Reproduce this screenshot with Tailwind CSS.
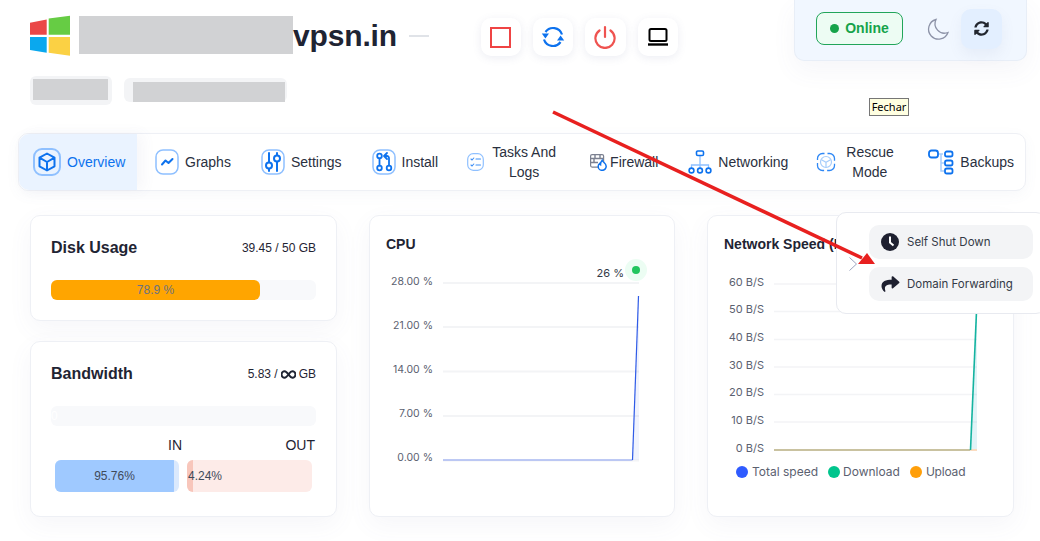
<!DOCTYPE html>
<html lang="en">
<head>
<meta charset="UTF-8">
<title>vpsn.in</title>
<script src="https://cdn.jsdelivr.net/npm/@tailwindcss/browser@4"></script>
</head>
<body>
<div class="relative w-[1040px] h-[541px] overflow-hidden bg-white font-['Liberation_Sans',sans-serif] text-[#1f2433]">

  <!-- header -->
  <div class="flex items-start h-[61px]">
    <svg class="ml-[30px] mt-[15px] w-[40px] h-[41px]" viewBox="30 15 40 41">
      <path fill="#ea4747" d="M30 22.7 46.7 19.4V34.7H30z"/>
      <path fill="#66cc44" d="M48.7 18.4 70 15.7V34.7H48.7z"/>
      <path fill="#0aa8ee" d="M30 37H46.7V52.7L30 50z"/>
      <path fill="#fbd144" d="M48.7 37H70V55.7L48.7 52.7z"/>
    </svg>
    <div class="ml-[9px] mt-[16px] w-[214px] h-[38px] bg-[#d1d2d4]"></div>
    <div class="mt-[18px] text-[30px] leading-[36px] font-bold tracking-[-0.15px]">vpsn.in</div>
    <div class="ml-[12px] mt-[35px] w-[20px] h-[2px] bg-[#e0e3e8]"></div>

    <div class="ml-[52px] mt-[18px] flex gap-[12px]">
      <button class="w-[40px] h-[38px] rounded-[10px] bg-white shadow-[0_2px_8px_rgba(100,110,160,0.12)] flex items-center justify-center">
        <span class="block w-[21px] h-[21px] border-[2.5px] border-[#ef4444]"></span>
      </button>
      <button class="w-[40px] h-[38px] rounded-[10px] bg-white shadow-[0_2px_8px_rgba(100,110,160,0.12)] flex items-center justify-center">
        <svg class="ml-[1px] w-[24px] h-[24px]" viewBox="0 0 24 24" fill="none" stroke="#0d72ee" stroke-width="2.2">
          <path d="M21 9.500A9.300 9.300 0 0 0 4.500 7"/>
          <path d="M3 14.500A9.300 9.300 0 0 0 19.500 17"/>
          <path fill="#0d72ee" stroke="none" d="M0.800 8.500H8L4.400 13.500zM16 15.500H23.200L19.600 10.500z"/>
        </svg>
      </button>
      <button class="w-[41px] h-[38px] rounded-[10px] bg-white shadow-[0_2px_8px_rgba(100,110,160,0.12)] flex items-center justify-center">
        <svg class="w-[24px] h-[24px]" viewBox="0 0 24 24" fill="none" stroke="#ef5350" stroke-width="2.2" stroke-linecap="round">
          <path d="M12 2v10"/>
          <path d="M6.500 5.500a9.600 9.600 0 1 0 11 0"/>
        </svg>
      </button>
      <button class="w-[40px] h-[38px] rounded-[10px] bg-white shadow-[0_2px_8px_rgba(100,110,160,0.12)] flex items-center justify-center">
        <svg class="w-[22px] h-[20px]" viewBox="0 0 22 20" fill="none" stroke="#000">
          <rect x="2.500" y="2" width="17" height="12" rx="1.500" stroke-width="2"/>
          <path d="M1 17.500h20" stroke-width="2.400"/>
        </svg>
      </button>
    </div>

    <!-- status panel -->
    <div class="ml-[116px] w-[233px] h-[61px] flex items-center bg-[#f1f7ff] border border-t-0 border-[#e8eef7] rounded-b-[10px] shadow-[0_10px_24px_rgba(100,110,160,0.06)] pb-[3px]">
      <div class="ml-[21px] w-[87px] h-[33px] flex items-center justify-center gap-[6px] bg-[#edfcf3] border border-[#22a55a] rounded-[8px] text-[14px] font-bold text-[#16a34a]">
        <span class="w-[9px] h-[9px] rounded-full bg-[#16a34a]"></span>Online
      </div>
      <svg class="ml-[23px] w-[24px] h-[24px]" viewBox="0 0 24 24" fill="none" stroke="#8d93a8" stroke-width="1.300">
        <path d="M10 2.500a10 10 0 1 0 12 13 9.500 9.500 0 0 1-12-13z"/>
      </svg>
      <div class="ml-[11px] w-[41px] h-[40px] rounded-[10px] bg-[#e3efff] shadow-[0_6px_14px_rgba(100,110,160,0.08)] flex items-center justify-center">
        <svg class="w-[15px] h-[15px]" viewBox="0 0 512 512" fill="#22262f"><path d="M370.72 133.28C339.458 104.008 298.888 87.962 255.848 88c-77.458.068-144.328 53.178-162.791 126.85-1.344 5.363-6.122 9.15-11.651 9.15H24.103c-7.498 0-13.194-6.807-11.807-14.176C33.933 94.924 134.813 8 256 8c66.448 0 126.791 26.136 171.315 68.685L463.03 40.97C478.149 25.851 504 36.559 504 57.941V192c0 13.255-10.745 24-24 24H345.941c-21.382 0-32.09-25.851-16.971-40.971l41.75-41.749zM32 296h134.059c21.382 0 32.09 25.851 16.971 40.971l-41.75 41.75c31.262 29.273 71.835 45.319 114.876 45.28 77.418-.07 144.315-53.144 162.787-126.849 1.344-5.363 6.122-9.15 11.651-9.15h57.304c7.498 0 13.194 6.807 11.807 14.176C478.067 417.076 377.187 504 256 504c-66.448 0-126.791-26.136-171.315-68.685L48.97 471.03C33.851 486.149 8 475.441 8 454.059V320c0-13.255 10.745-24 24-24z"/></svg>
      </div>
    </div>
  </div>

  <!-- server meta -->
  <div class="flex items-start mt-[15px] ml-[30px] h-[30px]">
    <div class="w-[82px] h-[29px] rounded-[6px] bg-[#f3f4f6] pl-[3px] pt-[3px]">
      <div class="w-[75px] h-[21px] bg-[#d1d2d4]"></div>
    </div>
    <div class="ml-[12px] mt-[2px] w-[163px] h-[24px] rounded-[6px] bg-[#f3f4f6] pl-[9px] pt-[4px]">
      <div class="w-[152px] h-[20px] bg-[#d1d2d4]"></div>
    </div>
  </div>

  <!-- tabs -->
  <nav class="ml-[18px] mt-[27px] w-[1008px] h-[58px] flex items-center border border-[#eef0f5] rounded-[10px] text-[14px] leading-[20px] text-[#2a3040] bg-white shadow-[0_4px_14px_rgba(100,110,160,0.05)]">
    <a class="w-[118px] h-full flex items-center pl-[14px] bg-[#eaf3ff] rounded-l-[10px] text-[#0d72ee] shadow-[6px_0_14px_rgba(100,110,160,0.06)]">
      <svg class="w-[28px] h-[28px]" viewBox="0 0 28 28" fill="none">
        <rect x="1" y="1" width="26" height="26" rx="8" stroke="#8fc0ff" stroke-width="2"/>
        <path d="M14 5.500 21.500 9.700V18.300L14 22.500 6.500 18.300V9.700zM6.500 9.700 14 14 21.500 9.700M14 14V22.500" stroke="#0d72ee" stroke-width="2" stroke-linejoin="round"/>
      </svg>
      <span class="ml-[6px]">Overview</span>
    </a>
    <a class="ml-[18px] flex items-center">
      <svg class="w-[24px] h-[26px]" viewBox="0 0 24 26" fill="none">
        <rect x="1" y="1" width="22" height="24" rx="7" stroke="#8fc0ff" stroke-width="1.500"/>
        <path d="M7 15.500 10.500 11.500 13.500 14 17.500 10" stroke="#0d72ee" stroke-width="2" stroke-linecap="round" stroke-linejoin="round"/>
      </svg>
      <span class="ml-[6px]">Graphs</span>
    </a>
    <a class="ml-[30px] flex items-center">
      <svg class="w-[24px] h-[26px]" viewBox="0 0 24 26" fill="none">
        <rect x="1" y="1" width="22" height="24" rx="7" stroke="#8fc0ff" stroke-width="1.500"/>
        <path d="M8 4v9M8 20v2M16 4v2M16 13v9" stroke="#0d72ee" stroke-width="2" stroke-linecap="round"/>
        <circle cx="8" cy="16.500" r="3" stroke="#0d72ee" stroke-width="2"/>
        <circle cx="16" cy="9.500" r="3" stroke="#0d72ee" stroke-width="2"/>
      </svg>
      <span class="ml-[6px]">Settings</span>
    </a>
    <a class="ml-[30px] flex items-center">
      <svg class="w-[24px] h-[26px]" viewBox="0 0 24 26" fill="none">
        <rect x="1" y="1" width="22" height="24" rx="7" stroke="#8fc0ff" stroke-width="1.500"/>
        <circle cx="7.500" cy="7" r="2.300" stroke="#0d72ee" stroke-width="1.800"/>
        <circle cx="7.500" cy="19" r="2.300" stroke="#0d72ee" stroke-width="1.800"/>
        <circle cx="17" cy="19" r="2.300" stroke="#0d72ee" stroke-width="1.800"/>
        <path d="M7.500 9.500v7M17 16.500V9a2 2 0 0 0-2-2h-2M15 4l-3 3 3 3" stroke="#0d72ee" stroke-width="1.800" stroke-linecap="round" stroke-linejoin="round"/>
      </svg>
      <span class="ml-[6px]">Install</span>
    </a>
    <a class="ml-[29px] flex items-center">
      <svg class="w-[17px] h-[18px]" viewBox="0 0 17 18" fill="none">
        <rect x="0.700" y="0.700" width="15.600" height="16.600" rx="5.500" stroke="#8fc0ff" stroke-width="1.200"/>
        <path d="M4 6l1 1 1.800-2M9 6h4.500M4 12l1 1 1.800-2M9 12h4.500" stroke="#3f8ff5" stroke-width="1.100" stroke-linecap="round"/>
      </svg>
      <span class="ml-[8px] text-center w-[64px]">Tasks And Logs</span>
    </a>
    <a class="ml-[34px] flex items-center">
      <svg class="w-[17px] h-[17px]" viewBox="0 0 17 17" fill="none">
        <rect x="0.600" y="0.600" width="13" height="12.500" rx="1.500" stroke="#7b8090" stroke-width="1.200"/>
        <path d="M1 4.500h12.500M1 8.500h7M5 1v3.500M10 1v3.500M4 4.500v4" stroke="#7b8090" stroke-width="1.400"/>
        <path d="M12.200 6.300c.4 1.700 4 3 4 6a4 4 0 0 1-8 .1c0-1.300.6-2.200 1.400-2.900.1.700.4 1.200.9 1.400-.1-1.700.6-3.300 1.700-4.600z" fill="#fff" stroke="#0d72ee" stroke-width="1.500"/>
      </svg>
      <span class="ml-[3px]">Firewall</span>
    </a>
    <a class="ml-[30px] flex items-center">
      <svg class="w-[24px] h-[24px]" viewBox="0 0 24 24" fill="none">
        <path d="M12 6v9M3.500 18v-3h17v3M12 15v3" stroke="#8fc0ff" stroke-width="1.300"/>
        <rect x="8.500" y="1" width="7" height="4.500" rx="1.300" stroke="#0d72ee" stroke-width="1.600"/>
        <circle cx="3.500" cy="20.500" r="2.400" stroke="#0d72ee" stroke-width="1.600"/>
        <circle cx="12" cy="20.500" r="2.400" stroke="#0d72ee" stroke-width="1.600"/>
        <circle cx="20.500" cy="20.500" r="2.400" stroke="#0d72ee" stroke-width="1.600"/>
      </svg>
      <span class="ml-[6px]">Networking</span>
    </a>
    <a class="ml-[28px] flex items-center">
      <svg class="w-[20px] h-[20px]" viewBox="0 0 20 20" fill="none">
        <rect x="1.500" y="1.500" width="17" height="17" rx="5" stroke="#2f88f5" stroke-width="1.300" stroke-dasharray="11.850 3" stroke-dashoffset="-5"/>
        <circle cx="10" cy="10" r="5.500" stroke="#a6cdfb" stroke-width="1.200"/>
        <path d="M5.500 7.800 10 10.300 14.500 7.800M10 10.300V15.500" stroke="#a6cdfb" stroke-width="1.200"/>
      </svg>
      <span class="ml-[10px] text-center w-[47px]">Rescue Mode</span>
    </a>
    <a class="ml-[35px] flex items-center">
      <svg class="w-[26px] h-[26px]" viewBox="0 0 26 26" fill="none">
        <path d="M11 5h4M13 5v17h3M13 14h3" stroke="#a6cdfb" stroke-width="1.500"/>
        <rect x="1" y="1.500" width="9" height="7" rx="2.500" stroke="#0d72ee" stroke-width="1.800"/>
        <rect x="17" y="2.500" width="7.500" height="5" rx="1.800" stroke="#0d72ee" stroke-width="1.800"/>
        <rect x="17" y="11.500" width="7.500" height="5" rx="1.800" stroke="#0d72ee" stroke-width="1.800"/>
        <rect x="17" y="19.500" width="7.500" height="5" rx="1.800" stroke="#0d72ee" stroke-width="1.800"/>
      </svg>
      <span class="ml-[6px]">Backups</span>
    </a>
  </nav>

  <!-- cards -->
  <div class="ml-[30px] mt-[24px] flex gap-[32px]">
    <div class="w-[307px] h-[302px] flex flex-col gap-[20px]">
      <section class="h-[106px] border border-[#eef0f5] rounded-[10px] bg-white shadow-[0_8px_24px_rgba(100,110,160,0.06)] px-[20px] pt-[22px]">
        <div class="flex items-center justify-between h-[20px]">
          <h2 class="text-[16px] font-bold">Disk Usage</h2>
          <span class="text-[12px]">39.45 / 50 GB</span>
        </div>
        <div class="mt-[22px] h-[20px] rounded-[6px] bg-[#f8f9fb]">
          <div class="w-[209px] h-full rounded-[6px] bg-[#ffa500] text-center text-[12px] leading-[20px] text-[#6b7280]">78.9 %</div>
        </div>
      </section>
      <section class="h-[176px] border border-[#eef0f5] rounded-[10px] bg-white shadow-[0_8px_24px_rgba(100,110,160,0.06)] px-[20px] pt-[22px]">
        <div class="flex items-center justify-between h-[20px]">
          <h2 class="text-[16px] font-bold">Bandwidth</h2>
          <span class="flex items-center gap-[3px] text-[12px]">5.83 /
            <svg class="w-[15px] h-[9px]" viewBox="0 0 15 9" fill="none" stroke="#1f2433" stroke-width="2">
              <path d="M7.500 4.500C6 2.500 5 1.300 3.700 1.300a3.200 3.200 0 0 0 0 6.400C5 7.700 6 6.500 7.500 4.500S9.800 1.300 11.300 1.300a3.200 3.200 0 0 1 0 6.400C9.800 7.700 9 6.500 7.500 4.500z"/>
            </svg>
            GB</span>
        </div>
        <div class="mt-[22px] h-[20px] rounded-[6px] bg-[#f8f9fb] text-[12px] leading-[20px] text-white">0</div>
        <div class="mt-[10px] ml-[4px] flex gap-[8px]">
          <div class="w-[124px]">
            <div class="text-right text-[14px] leading-[18px] -mr-[3px]">IN</div>
            <div class="mt-[6px] h-[32px] rounded-[6px] bg-[#dbe9fd] overflow-hidden">
              <div class="w-[119px] h-full bg-[#9fc9ff] text-center text-[12px] leading-[32px] text-[#3f4a5a]">95.76%</div>
            </div>
          </div>
          <div class="w-[125px]">
            <div class="text-right text-[14px] leading-[18px] -mr-[3px]">OUT</div>
            <div class="mt-[6px] h-[32px] rounded-[6px] bg-[#fdebe8] overflow-hidden relative">
              <div class="w-[6px] h-full bg-[#f8c6bb]"></div>
              <span class="absolute left-[1px] top-0 text-[12px] leading-[32px] text-[#3f4a5a]">4.24%</span>
            </div>
          </div>
        </div>
      </section>
    </div>

    <section class="w-[306px] h-[302px] border border-[#eef0f5] rounded-[10px] bg-white shadow-[0_8px_24px_rgba(100,110,160,0.06)]">
      <h2 class="pl-[16px] pt-[20px] text-[14px] leading-[16px] font-bold">CPU</h2>
      <svg class="block mt-[7px] w-[304px] h-[240px]" viewBox="370 259 304 240" font-family="Inter" font-size="10.500" fill="#5b6170" text-anchor="end">
        <g stroke="#f3f4f6" stroke-width="2">
          <path d="M443 283H639M443 327H639M443 371.500H639M443 416H639M443 460.500H639"/>
        </g>
        <text x="433" y="285">28.00 %</text>
        <text x="433" y="329">21.00 %</text>
        <text x="433" y="373">14.00 %</text>
        <text x="433" y="417">7.00 %</text>
        <text x="433" y="461">0.00 %</text>
        <path d="M443 460H632L639 296V460z" fill="#2f5be7" fill-opacity="0.07"/>
        <path d="M443 460H632.500" fill="none" stroke="#a9b8f2" stroke-width="1.500"/>
        <path d="M632.500 460 638.500 296" fill="none" stroke="#2f5be7" stroke-width="1.200"/>
        <circle cx="636" cy="270" r="11" fill="#ecfdf3"/>
        <circle cx="636" cy="270" r="4" fill="#22c55e"/>
        <text x="624" y="277" font-size="11" fill="#343a47">26 %</text>
      </svg>
    </section>

    <section class="w-[307px] h-[302px] border border-[#eef0f5] rounded-[10px] bg-white shadow-[0_8px_24px_rgba(100,110,160,0.06)]">
      <h2 class="pl-[16px] pt-[20px] text-[14px] leading-[16px] font-bold whitespace-nowrap">Network Speed (B/S)</h2>
      <svg class="block mt-[7px] w-[305px] h-[200px]" viewBox="708 259 305 200" font-family="Inter" font-size="11" fill="#5b6170" text-anchor="end">
        <path d="M774 284H977M774 311.500H977M774 339.500H977M774 367H977M774 394.500H977M774 422H977" stroke="#f3f4f6" stroke-width="1.500"/>
        <text x="764" y="286">60 B/S</text>
        <text x="764" y="313">50 B/S</text>
        <text x="764" y="341">40 B/S</text>
        <text x="764" y="369">30 B/S</text>
        <text x="764" y="396">20 B/S</text>
        <text x="764" y="424">10 B/S</text>
        <text x="764" y="452">0 B/S</text>
        <path d="M970.500 450 977 300V450z" fill="#2aa7c9" fill-opacity="0.14"/>
        <path d="M774 450H970.500" stroke="#c9c2a0" stroke-width="2"/>
        <path d="M970.500 450H977" stroke="#fbdcc0" stroke-width="2"/>
        <path d="M970.500 450 977 300" fill="none" stroke="#14b3a0" stroke-width="1.600"/>
      </svg>
      <div class="mt-[5px] ml-[28px] flex items-center font-['Inter',sans-serif] text-[12px] leading-[16px] text-[#5b6170]">
        <span class="w-[12px] h-[12px] rounded-full bg-[#2f5bff]"></span><span class="ml-[4px]">Total speed</span>
        <span class="ml-[10px] w-[12px] h-[12px] rounded-full bg-[#00c58d]"></span><span class="ml-[3px]">Download</span>
        <span class="ml-[10px] w-[12px] h-[12px] rounded-full bg-[#ff9f0a]"></span><span class="ml-[4px] tracking-[-0.2px]">Upload</span>
      </div>
    </section>
  </div>

  <!-- more menu, open over the network card -->
  <div class="absolute left-[836px] top-[212px] w-[210px] h-[102px] flex flex-col gap-[8px] border border-[#e8eaf0] rounded-[10px] bg-white pl-[32px] pr-[12px] pt-[12px] font-['Inter',sans-serif] text-[11.5px] text-[#343a47]">
    <button class="w-[164px] h-[34px] flex items-center pl-[12px] rounded-[10px] bg-[#f3f4f6]">
      <svg class="w-[18px] h-[18px]" viewBox="0 0 18 18">
        <circle cx="9" cy="9" r="9" fill="#1e2030"/>
        <path d="M9 3.500V9.500L12.500 12.500" fill="none" stroke="#fff" stroke-width="2"/>
      </svg>
      <span class="ml-[8px] pt-[1px]">Self Shut Down</span>
    </button>
    <button class="w-[164px] h-[34px] flex items-center pl-[12px] rounded-[10px] bg-[#f3f4f6]">
      <svg class="w-[19px] h-[18px]" viewBox="0 0 512 512" fill="#1e2030"><path d="M503.691 189.836L327.687 37.851C312.281 24.546 288 35.347 288 56.015v80.053C127.371 137.907 0 170.1 0 322.326c0 61.441 39.581 122.309 83.333 154.132 13.653 9.931 33.111-2.533 28.077-18.631C66.066 312.814 132.917 274.316 288 272.085V360c0 20.7 24.3 31.453 39.687 18.164l176-152c11.071-9.562 11.086-26.753 0-36.328z"/></svg>
      <span class="ml-[7px] pt-[1px]">Domain Forwarding</span>
    </button>
    <svg class="absolute left-[11px] top-[43px] w-[10px] h-[16px]" viewBox="0 0 10 16" fill="none" stroke="#9ca3c0" stroke-width="1"><path d="M1.500 1.500 8.500 8 1.500 14.500"/></svg>
  </div>

  <!-- native tooltip -->
  <div class="absolute left-[869px] top-[98px] w-[40px] h-[18px] bg-[#ffffe1] border border-[#767676] font-['Noto_Sans',sans-serif] text-[11px] leading-[16px] text-center text-black">Fechar</div>

  <!-- annotation arrow -->
  <svg class="absolute left-0 top-0 w-[1040px] h-[541px] pointer-events-none" viewBox="0 0 1040 541">
    <path d="M553 112 862 258" stroke="#e8201f" stroke-width="3.500"/>
    <path d="M875 264 858 264 867 253z" fill="#e8201f"/>
  </svg>
</div>
</body>
</html>
